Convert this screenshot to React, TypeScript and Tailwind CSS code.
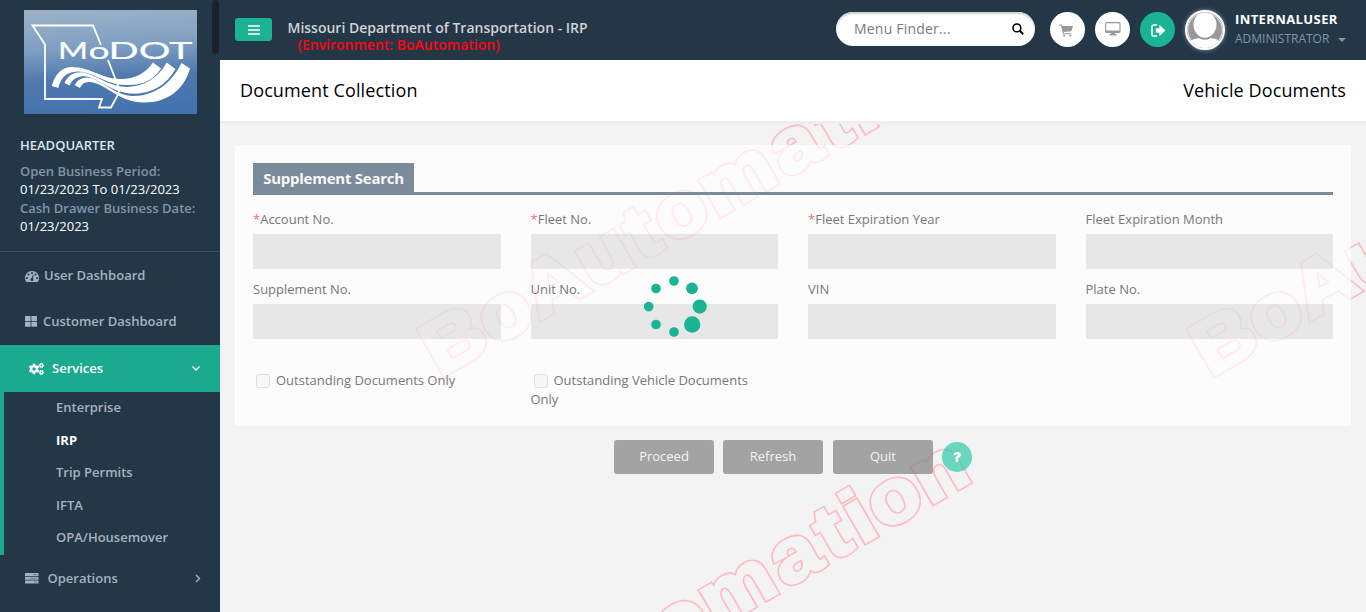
import React from "react";
import { FaCogs, FaQuestion } from "react-icons/fa";

const GLYPH_X = "0.3 56.1 103.5 159.4 209.5 238.7 287.6 359.7 407.9 437.9 460.9 508.6";

function WatermarkText({ className }: { className: string }) {
  return (
    <text x={GLYPH_X} y="0" strokeLinejoin="miter" className={className}>
      BoAutomation
    </text>
  );
}

function Watermark() {
  const origins = [
    [221, 255.5],
    [991, 255.5],
    [221, 665.5],
  ];
  return (
    <svg className="pointer-events-none absolute inset-0 h-full w-full" viewBox="0 0 1146 488">
      <defs>
        <mask id="outline" maskUnits="userSpaceOnUse" x="-20" y="-90" width="640" height="130">
          <WatermarkText className="fill-white stroke-white stroke-[5.8px] font-['Liberation_Sans',sans-serif] text-[76px] font-bold" />
          <WatermarkText className="fill-black stroke-black stroke-[2.8px] font-['Liberation_Sans',sans-serif] text-[76px] font-bold" />
        </mask>
      </defs>
      {origins.map(([x, y]) => (
        <g key={`${x}-${y}`} transform={`translate(${x} ${y}) rotate(-30) scale(1.11 1) translate(0 -2)`}>
          <rect x="-20" y="-90" width="640" height="130" className="fill-[#ffb9c3]" mask="url(#outline)" />
        </g>
      ))}
    </svg>
  );
}

function Logo() {
  return (
    <svg className="block h-[104px] w-[173px]" viewBox="0 0 173 104">
      <defs>
        <linearGradient id="sky" x1="0.4" y1="0" x2="0.5" y2="1">
          <stop offset="0" stopColor="#9ab1c7" />
          <stop offset="0.35" stopColor="#7f9fc2" />
          <stop offset="0.65" stopColor="#4f79ae" />
          <stop offset="1" stopColor="#4373ad" />
        </linearGradient>
      </defs>
      <rect width="173" height="104" fill="url(#sky)" />
      <path d="M77 35L69 15.5H8.5l12.5 19V89H78l-3 8.5h12l7-13 1.5-5L84 50" fill="none" stroke="#fff" strokeWidth="1.8" />
      <g className="fill-white font-['Lato',sans-serif] font-normal" stroke="#fff" strokeWidth=".2">
        <text x="34" y="49" fontSize="23.5" textLength="30" lengthAdjust="spacingAndGlyphs">M</text>
        <text x="64.5" y="49" fontSize="23" textLength="21" lengthAdjust="spacingAndGlyphs">o</text>
        <text x="84.5" y="49" fontSize="23.5" textLength="84" lengthAdjust="spacingAndGlyphs">DOT</text>
      </g>
      <g fill="#fff">
        <path d="M27.7 76C31 64 38 57 48 57C66 57 78 69 97 69C111 69 122 63 129 52.5L137 58.5C130 70 118 76 101 75C80 74 68 61 53 61.5C43 62 37 67 34.3 78Z" />
        <path d="M40.5 73C44 65 51 61 60 62.5C76 67 86 77 103 77C121 76 134 68 142.7 52.5L151.5 59C142 76 126 85 106 83.5C84 81 72 66 59 66C52 67 48 70 45.5 75.5Z" />
        <path d="M50.5 75C54 69 60 66 67 68C82 73 91 85 109 86C130 86 147 74 157.5 53L166 58.5C160 80 143 93 119 92.5C94 92 83 74 66 72C60 72 58 74 56 78Z" />
      </g>
    </svg>
  );
}

function GaugeIcon() {
  return (
    <svg viewBox="0 0 1792 1792" className="-mt-px h-[14px] w-[14px] fill-current">
      <path d="M384 1152q0-53-37.5-90.5t-90.5-37.5-90.5 37.5-37.5 90.5 37.5 90.5 90.5 37.5 90.5-37.5 37.5-90.5zm192-448q0-53-37.5-90.5t-90.5-37.5-90.5 37.5-37.5 90.5 37.5 90.5 90.5 37.5 90.5-37.5 37.5-90.5zm428 481l101-382q6-26-7.5-48.5t-38.5-29.5-48 6.5-30 39.5l-101 382q-60 5-107 43.5t-63 98.5q-20 77 20 146t117 89 146-20 89-117q16-60-6-117t-72-91zm660-33q0-53-37.5-90.5t-90.5-37.5-90.5 37.5-37.5 90.5 37.5 90.5 90.5 37.5 90.5-37.5 37.5-90.5zm-640-640q0-53-37.5-90.5t-90.5-37.5-90.5 37.5-37.5 90.5 37.5 90.5 90.5 37.5 90.5-37.5 37.5-90.5zm448 192q0-53-37.5-90.5t-90.5-37.5-90.5 37.5-37.5 90.5 37.5 90.5 90.5 37.5 90.5-37.5 37.5-90.5zm320 448q0 261-141 483-19 29-54 29h-1402q-35 0-54-29-141-221-141-483 0-182 71-348t191-286 286-191 348-71 348 71 286 191 191 286 71 348z" />
    </svg>
  );
}

function TilesIcon() {
  return (
    <svg viewBox="0 0 12 11" className="h-[11px] w-[12px] fill-current">
      <rect width="5.6" height="5" rx=".6" />
      <rect x="6.4" width="5.6" height="5" rx=".6" />
      <rect y="5.8" width="5.6" height="5" rx=".6" />
      <rect x="6.4" y="5.8" width="5.6" height="5" rx=".6" />
    </svg>
  );
}

function ServerIcon() {
  return (
    <svg viewBox="0 0 14 11" className="-mt-px h-[11px] w-[14px]">
      {[0, 3.8, 7.6].map((y) => (
        <rect key={y} y={y} width="13.5" height="3" rx=".3" className="fill-[#a7b1c2]" />
      ))}
      <path d="M8 1.5h4M5 5.3h7M9 9.1h3" className="stroke-[#5a6b7c]" strokeWidth=".7" />
    </svg>
  );
}

function Sidebar() {
  const children = ["Enterprise", "IRP", "Trip Permits", "IFTA", "OPA/Housemover"];
  return (
    <aside className="relative flex h-full w-[220px] shrink-0 flex-col bg-[#243747] text-[13px] font-semibold text-[#a7b1c2]">
      <div className="flex h-[252px] flex-col border-b border-[#3a5062] pt-[10px] whitespace-nowrap">
        <div className="pl-6"><Logo /></div>
        <div className="mt-[22px] pl-5 leading-[19px] text-[#dfe4ed]">HEADQUARTER</div>
        <div className="mt-[7px] flex flex-col pl-5 leading-[18.3px]">
          <span className="text-[#8095a8]">Open Business Period:</span>
          <span className="font-medium text-white">01/23/2023 To 01/23/2023</span>
          <span className="text-[#8095a8]">Cash Drawer Business Date:</span>
          <span className="font-medium text-white">01/23/2023</span>
        </div>
      </div>
      <div className="flex h-[46px] items-center gap-[5px] pt-[2px] pl-[25px]"><GaugeIcon />User Dashboard</div>
      <div className="flex h-[47px] items-center gap-[6px] pl-[25px]"><TilesIcon />Customer Dashboard</div>
      <div className="flex h-[47px] items-center bg-[#1baa8e] pr-[19px] pl-[29px] text-white">
        <FaCogs className="h-[14px] w-[15px]" />
        <span className="ml-2 flex-1">Services</span>
        <svg viewBox="0 0 10 8" className="h-2 w-[10px]">
          <path d="M1.5 1.5L5 5 8.5 1.5" fill="none" stroke="currentColor" strokeWidth="1.4" />
        </svg>
      </div>
      <div className="flex h-[163px] flex-col border-l-4 border-[#1baa8e] pl-[52px]">
        {children.map((c) => (
          <div key={c} className={c === "IRP" ? "h-[32.5px] leading-[31.8px] font-bold text-white" : "h-[32.5px] leading-[31.8px]"}>
            {c}
          </div>
        ))}
      </div>
      <div className="flex h-[46px] items-center pt-[2px] pr-[18px] pl-[25px]">
        <ServerIcon />
        <span className="ml-[8.5px] flex-1">Operations</span>
        <svg viewBox="0 0 8 10" className="h-[10px] w-2">
          <path d="M2 1L5.5 4.5 2 8" fill="none" stroke="currentColor" strokeWidth="1.4" />
        </svg>
      </div>
      <div className="absolute top-0 right-[1px] h-[54px] w-[7px] rounded-full bg-[#17222c]" />
    </aside>
  );
}

function Header() {
  return (
    <header className="flex h-[60px] shrink-0 bg-[#243747] whitespace-nowrap">
      <div className="mt-[18px] ml-[15px] flex h-[23px] w-[37px] flex-col items-center justify-center gap-[2px] rounded-[3px] bg-[#1ab394]">
        <i className="h-[2px] w-3 bg-[#d5e5e0]" />
        <i className="h-[2px] w-3 bg-[#d5e5e0]" />
        <i className="h-[2px] w-3 bg-[#d5e5e0]" />
      </div>
      <div className="ml-[15.5px] flex flex-col pt-[19px] text-[14px] leading-[17px] font-semibold">
        <span className="text-[#cfd2d5]">Missouri Department of Transportation - IRP</span>
        <span className="pl-[10px] text-[#fb0510]">(Environment: BoAutomation)</span>
      </div>
      <div className="ml-auto flex pt-3">
        <div className="flex h-[34px] w-[199px] items-center justify-between rounded-full bg-white pr-[11px] pb-px pl-[18px] text-[14px] tracking-[0.2px] text-[#7a7d80] shadow-[inset_0_2px_2px_#ccc]">
          Menu Finder...
          <svg viewBox="0 0 12 12" className="h-3 w-3">
            <circle cx="4.9" cy="4.9" r="3.9" fill="none" stroke="#000" strokeWidth="1.6" />
            <path d="M7.8 7.8L11.2 11.2" stroke="#000" strokeWidth="2" />
          </svg>
        </div>
        <div className="ml-[15px] flex h-[35px] w-[35px] items-center justify-center rounded-full bg-white">
          <svg viewBox="0 0 14 13" className="mt-[2px] mr-[3px] h-[13px] w-[14px] fill-[#999]">
            <path d="M0 .6h2.7L3.2 2H14l-1.7 5.3-7.7.8.3 1.2h7.6v1H4L2 1.6H0zM4.2 11h2v1.6h-2zM10.3 11h2v1.6h-2z" />
          </svg>
        </div>
        <div className="ml-[10px] flex h-[35px] w-[35px] items-center justify-center rounded-full bg-white">
          <svg viewBox="0 0 16 14" className="-mt-[1px] h-[14px] w-[16px]">
            <rect x=".6" y=".6" width="14.4" height="9.8" rx="1" fill="none" stroke="#999" strokeWidth="1.1" />
            <path d="M.6 8.6h14.4v1.8H.6zM6 10h4v2h1.5v1.4h-7V12H6z" fill="#999" />
          </svg>
        </div>
        <div className="ml-[10px] flex h-[35px] w-[35px] items-center justify-center rounded-full bg-[#1ab394]">
          <svg viewBox="0 0 15 13" className="mt-[2px] ml-[2px] h-[13px] w-[15px]">
            <path d="M6 1H2.8Q1 1 1 2.8v7.4Q1 12 2.8 12H6" fill="none" stroke="#fff" strokeWidth="1.6" />
            <path d="M4.8 4.3h3.6V.8L14.4 6.5l-6 5.7V8.7H4.8z" fill="#fff" />
          </svg>
        </div>
        <div className="-mt-[2px] ml-[10px] h-10 w-10 overflow-hidden rounded-full border-2 border-white bg-[#999] shadow-[0_0_4px_#8a9aa8]">
          <svg viewBox="0 0 36 36" className="h-full w-full">
            <circle cx="18" cy="18" r="17.3" fill="none" stroke="#fff" strokeWidth=".8" />
            <path d="M18 .8c7 0 11.5 4.8 11.5 11.5 0 8-5.500 13.500-11.500 13.500S6.500 20.300 6.500 12.300c0-6.700 4.500-11.500 11.500-11.500z" fill="#fff" />
            <path d="M3 29.500c3-2.600 7.500-3.600 9.500-3.200q5.500 3 11 0c2-.4 6.500.6 9.500 3.200Q27 36 18 36T3 29.500z" fill="#fff" />
          </svg>
        </div>
        <div className="-mt-[2px] mr-5 ml-[10px] flex w-[111px] flex-col">
          <span className="text-[13px] leading-[19px] font-bold tracking-[0.4px] text-white">INTERNALUSER</span>
          <span className="mt-px flex items-center justify-between text-[12px] leading-[18px] text-[#8095a8]">
            ADMINISTRATOR
            <i className="mt-[2px] border-x-4 border-t-4 border-x-transparent border-t-[#8095a8]" />
          </span>
        </div>
      </div>
    </header>
  );
}

function Field({ label, required }: { label: string; required?: boolean }) {
  return (
    <div className="h-[70px]">
      <div className="h-6 leading-[19px] text-[#777]">
        {required && <span className="text-[#ff6b6b]">*</span>}
        {label}
      </div>
      <div className="h-[35px] bg-[#a7a7a7]/25" />
    </div>
  );
}

function Checkbox({ label }: { label: string }) {
  return (
    <div>
      <i className="mr-[6px] ml-[3px] inline-block h-[14px] w-[14px] rounded-[3px] border border-[#ddd] bg-[#f7f7f7] align-[-3px]" />
      {label}
    </div>
  );
}

function SearchPanel() {
  return (
    <section className="relative mx-[15px] mt-[21px] h-[281px] bg-white/70 px-[18px] pt-[18px] text-[13px]">
      <div className="flex h-8 border-b-[3px] border-[#7c8b99]">
        <div className="h-[31px] w-[161px] bg-[#7c8b99] text-center text-[15px] leading-[31px] font-bold tracking-[-0.25px] whitespace-nowrap text-[#f8f9fa]">Supplement Search</div>
      </div>
      <div className="mt-[15.4px] grid grid-cols-4 gap-x-[30px]">
        <Field label="Account No." required />
        <Field label="Fleet No." required />
        <Field label="Fleet Expiration Year" required />
        <Field label="Fleet Expiration Month" />
        <Field label="Supplement No." />
        <Field label="Unit No." />
        <Field label="VIN" />
        <Field label="Plate No." />
      </div>
      <div className="mt-[20.6px] grid grid-cols-4 gap-x-[30px] leading-[19px] text-[#777]">
        <Checkbox label="Outstanding Documents Only" />
        <Checkbox label="Outstanding Vehicle Documents Only" />
      </div>
    </section>
  );
}

function Spinner() {
  const dots = [
    [30, 5, 4.8], [48, 12.3, 5.9], [55.7, 30.6, 7.1], [48.2, 48.5, 8.2],
    [30, 56, 4.8], [12, 48.5, 4.8], [4.7, 30.6, 4.8], [12, 12.5, 4.8],
  ];
  return (
    <svg viewBox="0 0 64 62" className="absolute top-[152px] left-[424px] h-[62px] w-16 fill-[#1ab394]">
      {dots.map(([x, y, r]) => <circle key={`${x}-${y}`} cx={x} cy={y} r={r} />)}
    </svg>
  );
}

export default function App() {
  return (
    <div className="flex h-[612px] w-[1366px] overflow-hidden bg-[#f3f3f3] font-['Open_Sans',sans-serif]">
      <Sidebar />
      <main className="flex min-w-0 flex-1 flex-col">
        <Header />
        <div className="flex h-16 shrink-0 items-center justify-between border-b-[3px] border-[#ededed] bg-white px-5 text-[18px] font-medium tracking-[0.12px] text-black">
          <h1>Document Collection</h1>
          <h2>Vehicle Documents</h2>
        </div>
        <div className="relative flex-1 overflow-hidden">
          <Watermark />
          <SearchPanel />
          <div className="relative mt-[14px] flex pl-[394px] text-[13px] text-[#f5f5f5]">
            <button className="h-[34px] w-[100px] rounded-[3px] bg-[#808080]/70 pb-px">Proceed</button>
            <button className="ml-[9px] h-[34px] w-[100px] rounded-[3px] bg-[#808080]/70 pb-px">Refresh</button>
            <button className="ml-[10px] h-[34px] w-[100px] rounded-[3px] bg-[#808080]/70 pb-px">Quit</button>
            <button className="mt-[2px] ml-[9px] flex h-[30px] w-[30px] items-center justify-center rounded-full bg-[#2dc9a9]/70 text-white">
              <FaQuestion className="h-[10px] w-[10px] stroke-white stroke-[40px]" />
            </button>
          </div>
          <Spinner />
        </div>
      </main>
    </div>
  );
}
